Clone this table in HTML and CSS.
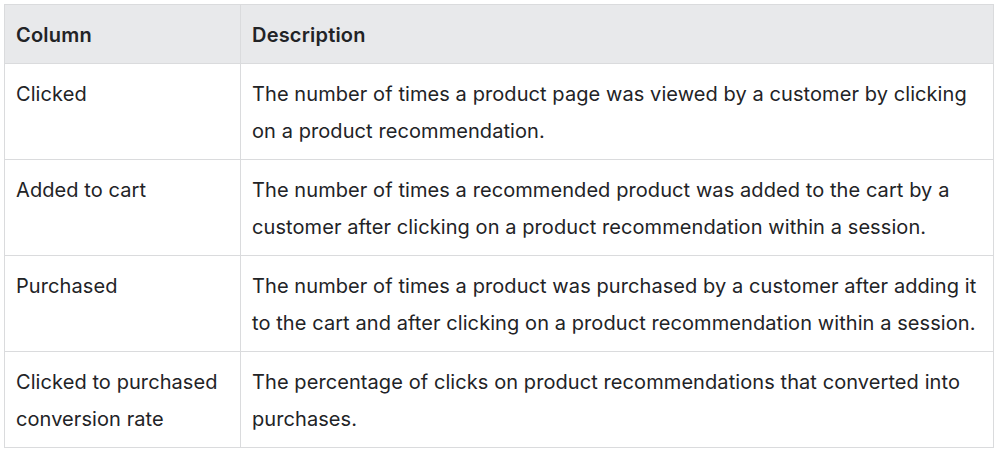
FILE: index.html
```html
<!DOCTYPE html>
<html>
<head>
<meta charset="utf-8">
<link rel="stylesheet" href="styles.css">
</head>
<body>
<table class="doc-table">
  <colgroup><col class="col-name"><col class="col-desc"></colgroup>
  <thead>
    <tr><th>Column</th><th>Description</th></tr>
  </thead>
  <tbody>
    <tr><td>Clicked</td><td>The number of times a product page was viewed by a customer by clicking on a product recommendation.</td></tr>
    <tr><td>Added to cart</td><td>The number of times a recommended product was added to the cart by a customer after clicking on a product recommendation within a session.</td></tr>
    <tr><td>Purchased</td><td>The number of times a product was purchased by a customer after adding it to the cart and after clicking on a product recommendation within a session.</td></tr>
    <tr><td>Clicked to purchased conversion rate</td><td>The percentage of clicks on product recommendations that converted into purchases.</td></tr>
  </tbody>
</table>
</body>
</html>
```
FILE: styles.css
```css
html, body {
  margin: 0;
  padding: 0;
  background: #ffffff;
}
body {
  padding: 4px 0 0 4px;
  font-family: Inter, "Noto Sans", sans-serif;
  color: #222326;
}
.doc-table {
  border-collapse: collapse;
  width: 990px;
  table-layout: fixed;
  font-size: 20px;
  line-height: 37px;
}
.col-name { width: 236px; }
.doc-table th,
.doc-table td {
  border: 1px solid #dadbdd;
  padding: 12px 11px 9px 11px;
  text-align: left;
  vertical-align: top;
}
.doc-table th {
  background: #e8e9eb;
  font-weight: 600;
  letter-spacing: 0.2px;
}
.doc-table td {
  font-weight: 400;
  letter-spacing: 0.08px;
}
```
